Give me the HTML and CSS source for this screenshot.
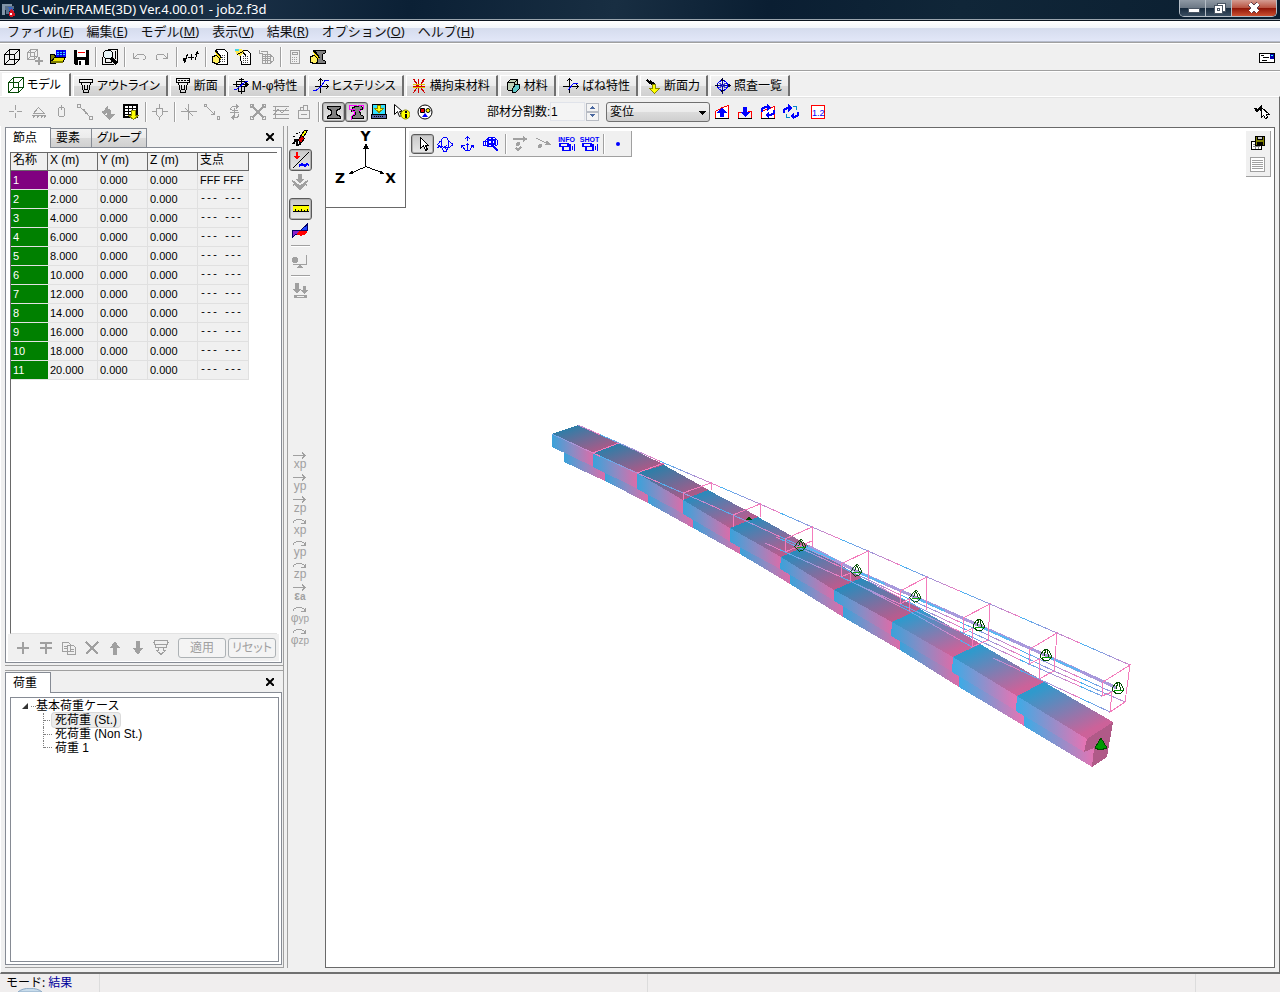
FILE: index.html
```html
<!DOCTYPE html>
<html lang="ja">
<head>
<meta charset="utf-8">
<title>UC-win/FRAME(3D) Ver.4.00.01 - job2.f3d</title>
<link rel="stylesheet" href="styles.css">
</head>
<body>
<svg class="defs" aria-hidden="true">
  <defs>
    <linearGradient id="top1" x1="0" y1=".32" x2=".58" y2="1"><stop offset="0" stop-color="#2e7ea8"/><stop offset="1" stop-color="#a95a88"/></linearGradient>
    <linearGradient id="top2" x1="0" y1=".32" x2=".58" y2="1"><stop offset="0" stop-color="#2c8abb"/><stop offset="1" stop-color="#b85c8e"/></linearGradient>
    <linearGradient id="top3" x1="0" y1=".32" x2=".58" y2="1"><stop offset="0" stop-color="#3099cc"/><stop offset="1" stop-color="#cc6299"/></linearGradient>
    <linearGradient id="side"><stop offset="0" stop-color="#3aa2da"/><stop offset=".5" stop-color="#8c8bc4"/><stop offset="1" stop-color="#dc6ca8"/></linearGradient>
    <linearGradient id="side2"><stop offset="0" stop-color="#3cabe6"/><stop offset=".5" stop-color="#928fcb"/><stop offset="1" stop-color="#e873b2"/></linearGradient>
    <linearGradient id="wire" gradientUnits="userSpaceOnUse" x1="0" y1="0" x2="60" y2="0" spreadMethod="repeat"><stop offset="0" stop-color="#46b4f4"/><stop offset="1" stop-color="#f27cc0"/></linearGradient>
    <symbol id="cone" viewBox="0 0 14 14"><path d="M1 8 4 3 7 1l3 2 3 6-3 3-4 1-4-3zM7 1 5 8M8 2l2 7" fill="none" stroke="#004a00"/><path d="M3 9.500h9" stroke="#00a000"/></symbol>
    <symbol id="cube" viewBox="0 0 16 16"><path d="M.5 5.500h10v10H.5zM5.500 .5h10v10h-10zM.5 5.500l5-5M10.500 5.500l5-5M10.500 15.500l5-5M.5 15.500l5-5" fill="none" stroke="currentColor"/></symbol>
    <symbol id="ibeam" viewBox="0 0 16 16"><path d="M1.500 2.500h13v2l-4 2v4l4 2v2h-13v-2l4-2v-4l-4-2z" fill="#808080" stroke="#000"/></symbol>
    <symbol id="straight" viewBox="0 0 14 7"><path d="M0 3.500h13M9 .5l3 3-3 3" fill="none" stroke="currentColor"/></symbol>
    <symbol id="curl" viewBox="0 0 14 7"><path d="M.5 5V3.500l3-2h5l3 2V6M8 5.500h4V2" fill="none" stroke="currentColor"/></symbol>
    <symbol id="camera" viewBox="0 0 16 9"><path d="M0 0h10v1h2v7H3V4H0zM2 1v2h6V1zM5 4v3h5V4z" fill="#00f" fill-rule="evenodd"/><path d="M13.500 3v4M15.500 1v7" stroke="#00f"/></symbol>
    <symbol id="pointer" viewBox="0 0 16 16"><path d="M5.500 1.500v11l3-3 2 5 2-1-2-4h3z" fill="#fff" stroke="#000"/></symbol>
  </defs>
</svg>

<header class="titlebar">
  <svg class="app-icon" viewBox="0 0 16 16"><path d="M1 2h10v3H4v8H1z" fill="#8296a8"/><path d="M4 4h9v3H8v5H5z" fill="#59708a"/><path d="M7 5h4l2 4-4 1z" fill="#3867c0"/><path d="M10 7c4 2 6 8 1 8-5 0-3-5-1-8z" fill="#d31522"/><path d="M10 11v2" stroke="#fff" stroke-width="2"/></svg>
  <h1 class="title">UC-win/FRAME(3D) Ver.4.00.01 - job2.f3d</h1>
  <div class="window-buttons">
    <button class="win" aria-label="最小化"><svg viewBox="0 0 26 16"><path d="M8 8h11v4H8z" fill="#fff" stroke="#4a5664"/></svg></button>
    <button class="win" aria-label="元のサイズ"><svg viewBox="0 0 26 16"><path d="M11 3h8v8h-8z" fill="#fff" stroke="#4a5664"/><path d="M8 5h8v8H8z" fill="#fff" stroke="#4a5664"/><path d="M11 8h2v2h-2z" fill="#fff" stroke="#4a5664"/></svg></button>
    <button class="win win-close" aria-label="閉じる"><svg viewBox="0 0 26 16"><path d="M9 4l8 8M17 4l-8 8" stroke="#5a4050" stroke-width="5"/><path d="M9 4l8 8M17 4l-8 8" stroke="#fff" stroke-width="3"/></svg></button>
  </div>
</header>

<nav class="menubar">
  <button class="menu">ファイル(<u>F</u>)</button>
  <button class="menu">編集(<u>E</u>)</button>
  <button class="menu">モデル(<u>M</u>)</button>
  <button class="menu">表示(<u>V</u>)</button>
  <button class="menu">結果(<u>R</u>)</button>
  <button class="menu">オプション(<u>O</u>)</button>
  <button class="menu">ヘルプ(<u>H</u>)</button>
</nav>

<div class="toolbar toolbar-main">
  <button class="tb" aria-label="新規"><svg><use href="#cube"/></svg></button>
  <button class="tb off" aria-label="追加"><svg viewBox="0 0 16 16"><path d="M.5 3.500h7v7h-7zM3.500 .5h7v7h-7zM.5 3.500l3-3M7.500 3.500l3-3M7.500 10.500l3-3M.5 10.500l3-3" fill="none" stroke="currentColor"/><path d="M12 8v8M8 12h8" stroke="currentColor" stroke-width="2"/></svg></button>
  <button class="tb" aria-label="開く"><svg viewBox="0 0 16 16"><path d="M6 1h10v7H6z" fill="#00f"/><path d="M7 3.500h8M7 5.500h8" stroke="#40d0ff"/><path d="M9.500 1v7M12.500 1v7" stroke="#00a"/><path d="M.5 5.500h4l1 2v7h-5z" fill="#808000" stroke="#000"/><path d="M4.500 8.500h11l-3 5H.5z" fill="#e8e000" stroke="#000"/><path d="M1 13h12" stroke="#808000" stroke-width="2"/></svg></button>
  <button class="tb" aria-label="保存"><svg viewBox="0 0 16 16"><path d="M1 1h15v15H2l-1-1z"/><path d="M4 1h9v7H4z" fill="#fff"/><path d="M5 3.500h7" stroke="#f00"/><path d="M5 11h7v5H5z" fill="#fff"/><path d="M6 12h2v4H6z"/></svg></button>
  <i class="sep"></i>
  <button class="tb" aria-label="検索"><svg viewBox="0 0 16 16"><path d="M5.500 .5h10v12M.5 8v7.500h11" fill="none" stroke="#000"/><path d="M3.500 10v3h6v-2M13.500 2v8" fill="none" stroke="#000"/><circle cx="6" cy="5.500" r="4.500" fill="#e8f4f8" stroke="#000"/><path d="M9 9l6 6" stroke="#000" stroke-width="3"/></svg></button>
  <i class="sep"></i>
  <button class="tb off" aria-label="元に戻す"><svg viewBox="0 0 16 16"><path d="M2.500 4v5h5M3 9l3-3 3-1h3l2 2v3l-2 1" fill="none" stroke="currentColor"/></svg></button>
  <button class="tb off" aria-label="やり直し"><svg viewBox="0 0 16 16"><path d="M13.500 4v5h-5M13 9l-3-3-3-1H4L2 7v3l2 1" fill="none" stroke="currentColor"/></svg></button>
  <i class="sep"></i>
  <button class="tb" aria-label="単位"><svg viewBox="0 0 16 16"><path d="M1.500 14l3-9M12 11l3-9M5 8.500h6M8.500 5v6" fill="none" stroke="#000"/><path d="M0 9h4l-3 5zM12 6l2-4 2 3z"/></svg></button>
  <i class="sep"></i>
  <button class="tb" aria-label="計算設定"><svg viewBox="0 0 16 16"><path d="M4.500 .5h8l3 3v12h-11z" fill="#fff" stroke="#000"/><path d="M8 6.500h6M8 8.500h6M8 10.500h6M8 12.500h6" stroke="#444" stroke-dasharray="1 1"/><path d="M.5 7.500l4-1 3 3v4l-3 1-4-1z" fill="#ffef60" stroke="#000"/><path d="M3.500 1.500l6 8" stroke="#000" stroke-width="2"/><path d="M3 3l6 7" stroke="#ffe000"/></svg></button>
  <button class="tb" aria-label="レポート設定"><svg viewBox="0 0 16 16"><path d="M4.500 1.500h8l3 3v11h-9z" fill="#fff" stroke="#000"/><path d="M8 7.500h6M8 9.500h6M8 11.500h6M8 13.500h6" stroke="#444" stroke-dasharray="1 1"/><path d="M0 1l6-1 3 3-4 4-4-2z" fill="#ffe84a"/><path d="M0 0h4v2H0z" fill="#40d8e8"/><path d="M2.500 5.500l5-3 4 5" fill="none" stroke="#000"/></svg></button>
  <button class="tb off" aria-label="レポート"><svg viewBox="0 0 16 16"><path d="M4.500 5.500h8v9h-8zM2.500 2.500h7v3M1.500 .5v4h3M4 7.500h8M4 9.500h8M4 11.500h8M7.500 5v9M9.500 5v9M12 6l3 2v4l-3 2" fill="none" stroke="currentColor"/></svg></button>
  <i class="sep"></i>
  <button class="tb off" aria-label="計算"><svg viewBox="0 0 16 16"><path d="M3.500 1.500h9v13h-9zM5.500 3.500h5v2h-5z" fill="none" stroke="currentColor"/><path d="M5 8.500h6M5 10.500h6M5 12.500h6" stroke="currentColor" stroke-dasharray="1 1"/></svg></button>
  <button class="tb" aria-label="断面編集"><svg viewBox="0 0 16 16"><path d="M4.500 1.500h11v2l-3 2v5l3 2v2h-11v-2l3-2v-5z" fill="#808080" stroke="#000"/><path d="M.5 7.500l4-1 3 3v4l-3 1-4-1z" fill="#ffef60" stroke="#000"/><path d="M3.500 1.500l6 8" stroke="#000" stroke-width="2"/><path d="M3 3l6 7" stroke="#ffe000"/></svg></button>
  <button class="tb mail" aria-label="メール"><svg viewBox="0 0 16 16"><path d="M.5 4.500h15v9H.5z" fill="#fff" stroke="#000"/><path d="M2 6.500h3M4 8.500h6M3 11.500h5" stroke="#000"/><path d="M11 5h4v5h-4z" fill="#00a"/><path d="M12 6.500h2" stroke="#3ff"/></svg></button>
</div>

<nav class="tabs">
  <button class="tab tab-on"><svg class="green"><use href="#cube"/></svg>モデル</button>
  <button class="tab"><svg viewBox="0 0 16 16"><path d="M1.500 1.500h13v3h-13zM3.500 4.500l2 10h5l2-10M6.500 6.500v5h3v-5" fill="none" stroke="#000"/></svg>アウトライン</button>
  <button class="tab"><svg viewBox="0 0 16 16"><path d="M1.500 .5h13v4h-13zM3.500 4.500l2 10h5l2-10M6.500 6.500v5h3v-5" fill="none" stroke="#000"/><path d="M3 2.500h11" stroke="#000" stroke-dasharray="2 1"/></svg>断面</button>
  <button class="tab"><svg viewBox="0 0 16 16"><path d="M0 6.500h15M8.500 0v16M3.500 3.500h9v5h-9zM5.500 8.500v5h6v-5M6 1.500h5" fill="none" stroke="#000"/><path d="M1 12l3-1 8-7 3-1" fill="none" stroke="#00f"/><path d="M13 4l3 2.500-3 2.500z"/></svg>M-φ特性</button>
  <button class="tab"><svg viewBox="0 0 16 16"><path d="M2 8.500h14M7.500 15V1M5 3l2.500-2L10 3M13 6l2.500 2.500L13 11" fill="none" stroke="#000"/><path d="M0 12.500h3l5-4 4-6h4" fill="none" stroke="#00f"/></svg>ヒステリシス</button>
  <button class="tab"><svg viewBox="0 0 16 16"><path d="M2.500 1l3 5v4l-3 5M13.500 1l-3 5v4l3 5M7.500 1v14" fill="none" stroke="#d00000" stroke-width="1"/><path d="M3 1l3 5v4l-3 4M13 1l-3 5v4l3 4" fill="none" stroke="#d00000"/><path d="M2 6.500h12M2 9.500h12" stroke="#e0c000"/><path d="M2 8h12" stroke="#d00000"/></svg>横拘束材料</button>
  <button class="tab"><svg viewBox="0 0 16 16"><path d="M2.500 4.500l3-3h7l-3 3zM2.500 4.500h7v8h-6l-1-1zM9.500 4.500l3-3v8l-3 3z" fill="#c0d0b8" stroke="#000"/><path d="M7.500 10.500l3-4h4v4l-4 4h-3z" fill="#60c8c8" stroke="#000"/></svg>材料</button>
  <button class="tab"><svg viewBox="0 0 16 16"><path d="M0 8.500h15M6.500 15V1M4 3l2.500-2L9 3M13 6l2.500 2.500L13 11" fill="none" stroke="#000"/><path d="M5 12l6-7h4" fill="none" stroke="#00f"/></svg>ばね特性</button>
  <button class="tab"><svg viewBox="0 0 16 16"><path d="M3 0L1 3l3 3 4 1 3 1-1-3-3-1-1-2-2 1z"/><path d="M7.500 6.500h3v4h4l-5 5-5-5h3z" fill="#ff0" stroke="#880"/></svg>断面力</button>
  <button class="tab"><svg viewBox="0 0 16 16"><path d="M0 7.500h16M7.500 0v16" stroke="#00a"/><circle cx="7.500" cy="7.500" r="5" fill="none" stroke="#00f"/><path d="M4 5l7 5M11 5l-7 5" stroke="#44c"/><path d="M0 7.500l3-2v4zM16 7.500l-3-2v4zM5.500 3l2-3 2 3zM5.500 12l2 3 2-3z" fill="#003"/></svg>照査一覧</button>
</nav>

<div class="toolbar toolbar-model">
  <button class="tb off" aria-label="節点"><svg viewBox="0 0 16 16"><path d="M1 7.500h5M9 7.500h5M7.500 1v5M7.500 9v5" stroke="currentColor"/></svg></button>
  <button class="tb off" aria-label="支点"><svg viewBox="0 0 16 16"><path d="M7.500 3.500l-5 6h11zM1 11.500h14M2 14l2-3M6 14l2-3M10 14l2-3M13 14l2-3" fill="none" stroke="currentColor"/></svg></button>
  <button class="tb off" aria-label="剛体"><svg viewBox="0 0 16 16"><path d="M4.500 4.500l1-1h4l1 1v7l-1 1h-4l-1-1zM7.500 1v5" fill="none" stroke="currentColor"/></svg></button>
  <button class="tb off" aria-label="部材"><svg viewBox="0 0 16 16"><path d="M2 2l12 12" stroke="currentColor"/><path d="M.5 .5h3v3h-3zM12.500 12.500h3v3h-3z" fill="#f0f0f0" stroke="currentColor"/><path d="M6 5l4 5" stroke="currentColor" stroke-width="2"/></svg></button>
  <button class="tb off" aria-label="荷重"><svg viewBox="0 0 16 16"><path d="M8 1L5 4v2L1 8l3 3 3-2v2H4l5 5 6-6h-4V6L8 5z" fill="currentColor"/></svg></button>
  <button class="tb" aria-label="表入力"><svg viewBox="0 0 16 16"><path d="M1 1h13v12H1z" fill="#fff" stroke="#000" stroke-width="2"/><path d="M1 4.500h13M1 7.500h13M1 10.500h13M5.500 1v12M9.500 1v12" stroke="#000"/><path d="M8.500 6.500h4v5h3l-5 4-5-4h3z" fill="#ff0" stroke="#880"/></svg></button>
  <i class="sep"></i>
  <button class="tb off" aria-label="選択節点"><svg viewBox="0 0 16 16"><path d="M0 7.500h5M11 7.500h5M7.500 0v4M7.500 13v3M4.500 4.500h6v6l-3 3-3-3z" fill="none" stroke="currentColor"/></svg></button>
  <i class="sep"></i>
  <button class="tb off" aria-label="座標"><svg viewBox="0 0 16 16"><path d="M0 7.500h16M7.500 0v16M4 4l8 8" stroke="currentColor"/></svg></button>
  <button class="tb off" aria-label="移動"><svg viewBox="0 0 16 16"><path d="M2 2l9 9M7 10.500h3.500V7M.5 .5h2v2h-2zM13.500 12.500h2v3h-2z" fill="none" stroke="currentColor"/></svg></button>
  <button class="tb off" aria-label="回転"><svg viewBox="0 0 16 16"><path d="M7.500 4v9M11 2.500H5.500l-2 2 1 2M3 8.500h9M11 10l1 2-2 1.500H5M9 .5l2 2-2 2M7 11.500l-2 2 2 2M5 6.500h6" fill="none" stroke="currentColor"/></svg></button>
  <button class="tb off" aria-label="交差"><svg viewBox="0 0 16 16"><path d="M2 2l12 12M14 2L2 14" stroke="currentColor" stroke-width="2"/><path d="M.5 .5h3v3h-3zM12.500 .5h3v3h-3zM.5 12.500h3v3h-3zM12.500 12.500h3v3h-3z" fill="none" stroke="currentColor"/></svg></button>
  <button class="tb off" aria-label="格子"><svg viewBox="0 0 16 16"><path d="M0 2.500h16M0 6.500h16M0 10.500h16M0 14.500h16M2.500 2v12M1 10l4-5 4 4 5-5" fill="none" stroke="currentColor"/></svg></button>
  <button class="tb off" aria-label="グループ"><svg viewBox="0 0 16 16"><path d="M2.500 6.500h11v8h-11zM4.500 6.500v-3h3M7.500 6.500v-5h4v5M5 10.500h6" fill="none" stroke="currentColor"/></svg></button>
  <i class="sep"></i>
  <button class="tb pressed" aria-label="断面表示"><svg><use href="#ibeam"/></svg></button>
  <button class="tb pressed" aria-label="変形表示"><svg viewBox="0 0 16 16"><path d="M3.500 3.500l8-2 3 3-4 2 1 4 3 2v2h-11v-2l3-2-1-4-3 1z" fill="#808080" stroke="#000"/><path d="M.5 1v4h5M3 7.500h2v3l-3 2v3M.5 1.500h7M9 1.500h5.500v3M10 6.500h2" fill="none" stroke="#f0f"/></svg></button>
  <button class="tb" aria-label="取込"><svg viewBox="0 0 16 16"><path d="M1.500 .5h13v10h-13z" fill="#30e0ff" stroke="#000"/><path d="M6.500 1.500h3v3h3l-4.500 4-4.500-4h3z" fill="#ff0" stroke="#880"/><path d="M.5 10.500h15v4H.5z" fill="#5868a8" stroke="#000"/><path d="M3 12.500h10" stroke="#000" stroke-dasharray="1 1"/></svg></button>
  <button class="tb round" aria-label="情報"><svg viewBox="0 0 16 16"><path d="M.5 .5v10l3-3 2 5 2-1-2-4h3z" fill="#fff" stroke="#000"/><circle cx="11.500" cy="10.500" r="4.500" fill="#ff0" stroke="#880"/><path d="M12 7v2M12 10v4" stroke="#000" stroke-width="2"/></svg></button>
  <button class="tb round" aria-label="表示色"><svg viewBox="0 0 16 16"><circle cx="8" cy="8" r="7" fill="#fff" stroke="#000"/><path d="M3.500 4.500h4v4h-4z" fill="#e00" stroke="#000"/><circle cx="11" cy="6.500" r="2" fill="#ff0" stroke="#000"/><path d="M8 9l3 4H5z" fill="#00f"/></svg></button>
  <label class="division" for="division">部材分割数:</label>
  <input class="division-input" id="division" type="text" value="1">
  <span class="spinner">
    <button aria-label="増やす"><svg viewBox="0 0 8 4"><path d="M1 4l3-3 3 3z"/></svg></button>
    <button aria-label="減らす"><svg viewBox="0 0 8 4"><path d="M1 0l3 3 3-3z"/></svg></button>
  </span>
  <span class="combo"><select aria-label="結果種別"><option>変位</option></select><svg viewBox="0 0 8 4"><path d="M0 0h8L4 4z"/></svg></span>
  <button class="tb" aria-label="最大"><svg viewBox="0 0 16 16"><path d="M1.500 14V7.500l7-4 6-2V14z" fill="#fff" stroke="#f00"/><path d="M6 13V9H3l5-6 5 6h-3v4z" fill="#00f"/><path d="M1 14.500h14" stroke="#000"/></svg></button>
  <button class="tb" aria-label="最小"><svg viewBox="0 0 16 16"><path d="M1.500 14V8.500h4M11 7.500h3.500V14" fill="none" stroke="#f00"/><path d="M6 3v5H3l5 5 5-5h-3V3z" fill="#00f"/><path d="M1 14.500h14" stroke="#000"/></svg></button>
  <button class="tb" aria-label="回転最大"><svg viewBox="0 0 16 16"><path d="M1.500 14V7.500l13-5V14z" fill="#fff" stroke="#f00"/><path d="M2 8V5l3-2h3M14 6v3l-3 2H9" fill="none" stroke="#00f" stroke-width="2"/><path d="M7 0l4 3-4 4zM9 8l-4 3 4 3z" fill="#00f"/><path d="M1 14.500h14" stroke="#000"/></svg></button>
  <button class="tb" aria-label="回転"><svg viewBox="0 0 16 16"><path d="M1 9V6l3-2h2M15 8v3l-3 2h-2" fill="none" stroke="#00f" stroke-width="2"/><path d="M5 0l4 4-4 4zM11 9l-4 3 4 4z" fill="#00f"/><path d="M10 2.500h3v3M3.500 10v3h3" fill="none" stroke="#08c"/></svg></button>
  <button class="tb digits" aria-label="小数点"><svg viewBox="0 0 16 16"><path d="M1.500 1.500h13v13h-13z" fill="#fff" stroke="#f00"/><text x="2" y="12" class="digit-text">1.2</text></svg></button>
  <button class="tb pick" aria-label="選択"><svg viewBox="0 0 16 16"><path d="M1 4l2 3 4-4v4" fill="none" stroke="#000" stroke-width="2"/><path d="M7.500 3.500v10l2-2 2 3 2-1-1-3h3z" fill="#fff" stroke="#000"/></svg></button>
</div>

<main class="workspace">
  <aside class="side">
    <section class="pane pane-nodes">
      <div class="pane-tabs">
        <button class="ptab ptab-on">節点</button><button class="ptab">要素</button><button class="ptab">グループ</button>
        <button class="close" aria-label="閉じる"><svg viewBox="0 0 8 8"><path d="M0 0l8 8M8 0L0 8" stroke="#000" stroke-width="2"/></svg></button>
      </div>
      <div class="pane-body">
        <div class="grid-box">
          <table class="grid">
            <thead><tr><th class="c-name">名称</th><th class="c-num">X (m)</th><th class="c-num">Y (m)</th><th class="c-num">Z (m)</th><th class="c-fix">支点</th></tr></thead>
            <tbody>
              <tr class="current"><th>1</th><td>0.000</td><td>0.000</td><td>0.000</td><td>FFF FFF</td></tr>
              <tr><th>2</th><td>2.000</td><td>0.000</td><td>0.000</td><td class="free">--- ---</td></tr>
              <tr><th>3</th><td>4.000</td><td>0.000</td><td>0.000</td><td class="free">--- ---</td></tr>
              <tr><th>4</th><td>6.000</td><td>0.000</td><td>0.000</td><td class="free">--- ---</td></tr>
              <tr><th>5</th><td>8.000</td><td>0.000</td><td>0.000</td><td class="free">--- ---</td></tr>
              <tr><th>6</th><td>10.000</td><td>0.000</td><td>0.000</td><td class="free">--- ---</td></tr>
              <tr><th>7</th><td>12.000</td><td>0.000</td><td>0.000</td><td class="free">--- ---</td></tr>
              <tr><th>8</th><td>14.000</td><td>0.000</td><td>0.000</td><td class="free">--- ---</td></tr>
              <tr><th>9</th><td>16.000</td><td>0.000</td><td>0.000</td><td class="free">--- ---</td></tr>
              <tr><th>10</th><td>18.000</td><td>0.000</td><td>0.000</td><td class="free">--- ---</td></tr>
              <tr><th>11</th><td>20.000</td><td>0.000</td><td>0.000</td><td class="free">--- ---</td></tr>
            </tbody>
          </table>
        </div>
        <div class="edit-bar">
          <button class="tb off" aria-label="追加"><svg viewBox="0 0 16 16"><path d="M2 8h12M8 2v12" stroke="currentColor" stroke-width="2"/></svg></button>
          <button class="tb off" aria-label="挿入"><svg viewBox="0 0 16 16"><path d="M2 3h12M2 8h12M8 3v11" stroke="currentColor" stroke-width="2"/></svg></button>
          <button class="tb off" aria-label="複写"><svg viewBox="0 0 16 16"><path d="M1.500 2.500h6l2 2v7h-8zM6.500 5.500h6l2 2v7h-8zM3 6.500h3M3 8.500h3M9 9.500h4M9 11.500h4" fill="#f0f0f0" stroke="currentColor"/></svg></button>
          <button class="tb off" aria-label="削除"><svg viewBox="0 0 16 16"><path d="M2 2l12 12M14 2L2 14" stroke="currentColor" stroke-width="2"/></svg></button>
          <button class="tb off" aria-label="上へ"><svg viewBox="0 0 16 16"><path d="M8 1l5 7h-3v7H6V8H3z" fill="currentColor"/></svg></button>
          <button class="tb off" aria-label="下へ"><svg viewBox="0 0 16 16"><path d="M8 15l5-7h-3V1H6v7H3z" fill="currentColor"/></svg></button>
          <button class="tb off" aria-label="並べ替え"><svg viewBox="0 0 16 16"><path d="M2 .5h12l1 2-1 2H2l-1-2zM2.500 4.500h11v3h-11zM5.500 7.500h5v3h2l-4.500 4-4.500-4h2z" fill="none" stroke="currentColor"/></svg></button>
          <button class="push" disabled>適用</button>
          <button class="push" disabled>リセット</button>
        </div>
      </div>
    </section>
    <section class="pane pane-loads">
      <div class="pane-tabs">
        <button class="ptab ptab-on">荷重</button>
        <button class="close" aria-label="閉じる"><svg viewBox="0 0 8 8"><path d="M0 0l8 8M8 0L0 8" stroke="#000" stroke-width="2"/></svg></button>
      </div>
      <div class="pane-body">
        <div class="tree">
          <div class="root"><svg viewBox="0 0 6 6"><path d="M6 0v6H0z" fill="#333"/></svg><i></i>基本荷重ケース</div>
          <ul>
            <li><span class="picked">死荷重 (St.)</span></li>
            <li><span>死荷重 (Non St.)</span></li>
            <li><span>荷重 1</span></li>
          </ul>
        </div>
      </div>
    </section>
  </aside>

  <div class="rail">
    <button class="tb" aria-label="消去"><svg viewBox="0 0 16 16"><path d="M7.500 7.500l5-7h3l-5 8z" fill="#ff0" stroke="#000"/><path d="M6.500 9.500l3-4 3 3-3 4h-2z" fill="#d00" stroke="#000"/><path d="M1 14l3-4h1v5l4-1" fill="none" stroke="#000" stroke-width="2"/><path d="M1 6.500h2M4 3.500h2M2 9.500h1M7 2.500h1" stroke="#000"/></svg></button>
    <button class="tb pressed" aria-label="荷重結果"><svg viewBox="0 0 16 16"><path d="M0 16L16 0" stroke="#000"/><path d="M4 0v5" stroke="#f00" stroke-width="2"/><path d="M1 4h6L4 8z" fill="#f00"/><path d="M6 14l3-2 3 2 2-2 2 1" fill="none" stroke="#00f" stroke-width="2"/></svg></button>
    <button class="tb off" aria-label="変形"><svg viewBox="0 0 16 16"><path d="M6 0h4v5h3l-5 4-5-4h3z" fill="currentColor"/><path d="M0 7l2 1 6 5 6-5 2-1M1 11l2-1 5 5 5-5 2 1" fill="none" stroke="currentColor" stroke-width="2"/></svg></button>
    <button class="tb pressed ruler" aria-label="寸法"><svg viewBox="0 0 16 16"><path d="M0 4h16v7H0z" fill="#ff0"/><path d="M0 4.500h16M0 10.500h16M2.500 8v3M5.500 9v2M8.500 8v3M11.500 9v2M14.500 8v3" stroke="#000"/></svg></button>
    <button class="tb" aria-label="断面力図"><svg viewBox="0 0 16 16"><path d="M0 7h9l-4 4-5 4z" fill="#82c"/><path d="M9 7l7-6v6z" fill="#24f"/><path d="M4 11l5-4h7c-2 6-7 7-12 4z" fill="#f00"/><path d="M.5 15V7.500h15V1L9 7M0 14l5-3" fill="none" stroke="#006"/></svg></button>
    <i class="hsep"></i>
    <button class="tb off" aria-label="つり合い"><svg viewBox="0 0 16 16"><circle cx="3" cy="7" r="3" fill="currentColor"/><path d="M1 11.500h13.500V2" fill="none" stroke="currentColor"/><path d="M8 11l3 4H5z" fill="currentColor"/></svg></button>
    <i class="hsep"></i>
    <button class="tb off" aria-label="沈下"><svg viewBox="0 0 16 16"><path d="M3 0h4v6h2l-4 5-4-5h2zM11 3h3v4h2l-4 4-3-4h2z" fill="currentColor"/><path d="M2 12h13v3H2z" fill="currentColor"/><path d="M5 13.500h7" stroke="#f0f0f0"/></svg></button>
    <div class="components">
      <button class="comp" aria-label="xp 方向"><svg><use href="#straight"/></svg><span>xp</span></button>
      <button class="comp" aria-label="yp 方向"><svg><use href="#straight"/></svg><span>yp</span></button>
      <button class="comp" aria-label="zp 方向"><svg><use href="#straight"/></svg><span>zp</span></button>
      <button class="comp" aria-label="xp 回転"><svg><use href="#curl"/></svg><span>xp</span></button>
      <button class="comp" aria-label="yp 回転"><svg><use href="#curl"/></svg><span>yp</span></button>
      <button class="comp" aria-label="zp 回転"><svg><use href="#curl"/></svg><span>zp</span></button>
      <button class="comp" aria-label="ひずみ"><svg><use href="#straight"/></svg><span class="strong">ε<small>a</small></span></button>
      <button class="comp" aria-label="曲率 yp"><svg><use href="#curl"/></svg><span>φ<small>yp</small></span></button>
      <button class="comp" aria-label="曲率 zp"><svg><use href="#curl"/></svg><span>φ<small>zp</small></span></button>
    </div>
  </div>

  <section class="view">
    <svg class="model" viewBox="326 128 948 839" preserveAspectRatio="xMinYMin meet" role="img" aria-label="3Dモデル">
      <g fill="url(#side)">
        <path d="M564 448 605 468V481L564 462z"/><path d="M605 467 648 489V503L605 481z"/>
        <path d="M648 489 693 514V528L648 503z"/><path d="M693 513 740 540V554L693 528z"/>
        <path d="M740 540 790 570V584L740 554z"/><path d="M790 569 843 602V617L790 584z"/>
        <path d="M843 602 900 636V650L843 617z"/><path d="M900 635 959 672V687L900 650z"/>
      </g>
      <g fill="url(#side2)"><path d="M959 672 1024 710V726L959 687z"/><path d="M1024 708 1096 745 1092 767 1024 726z"/></g>
      <g fill="url(#side)">
        <path d="M552 434 594 453V467L552 447z"/><path d="M593 453 638 473V489L593 467z"/>
        <path d="M637 473 684 500V514L637 489z"/><path d="M683 500 731 528V542L683 514z"/>
        <path d="M730 528 782 557V570L730 542z"/><path d="M781 557 835 590V601L780 569z"/>
        <path d="M834 590 893 622V636L834 601z"/><path d="M892 622 954 657 953 672 891 636z"/>
      </g>
      <g fill="url(#side2)"><path d="M953 657 1018 696 1017 711 952 672z"/><path d="M1017 696 1087 739 1084 752 1016 711z"/></g>
      <g fill="url(#top1)">
        <path d="M552 434 578 425 620 443 593 453z"/><path d="M593 453 619 443 665 465 637 473z"/>
        <path d="M637 473 664 465 709 490 683 500z"/>
      </g>
      <g fill="url(#top2)">
        <path d="M683 500 708 490 759 517 730 528z"/><path d="M730 528 758 517 808 545 781 557z"/>
        <path d="M781 557 808 545 862 578 834 590z"/><path d="M834 590 861 578 921 609 892 622z"/>
      </g>
      <g fill="url(#top3)">
        <path d="M892 622 920 609 981 644 953 657z"/><path d="M953 657 980 644 1045 682 1017 696z"/>
        <path d="M1017 696 1044 682 1113 722 1087 739z"/>
      </g>
      <path d="M1087 739 1113 722 1107 757 1092 767 1094 748 1084 752z" fill="#b05a88"/>
      <path d="M1101 738l-6 10 5 2 7-2z" fill="#009a00" stroke="#004a00"/>
      <g fill="none" stroke="url(#wire)">
        <path d="M578 425 619 443 664 463 711 483 760 504 812 527 868 551 927 577 990 604 1057 633 1130 665"/>
        <path d="M552 434 593 453 637 473 683 493 733 515 785 539 841 564 900 591 963 618 1030 649 1103 682"/>
        <path d="M765 543 785 552 841 577 900 604 963 633 1029 664 1102 696"/>
        <path d="M776 537 800 548 856 574 909 599 973 628 1039 659 1112 692"/>
        <path d="M850 581 909 611 972 647M993 658 1039 679 1110 712M868 581 926 611 988 640 1054 671 1125 702"/>
      </g>
      <path d="M808 546 856 571 915 597 978 625 1045 655 1117 688" fill="none" stroke="#a999dc" stroke-width="3"/>
      <path d="M806 547 835 560M860 573 885 584M918 599 945 611M981 627 1010 640M1048 657 1080 671" fill="none" stroke="#5cb6f2" stroke-width="2"/>
      <g fill="none" stroke="#f47cbc">
        <path d="M593 453 619 443M637 473 664 463M683 500V493L711 483V490M733 527V515L760 504V517"/>
        <path d="M812 547V527L785 539V552L812 541M868 581V551L841 564V577L850 573V581"/>
        <path d="M926 611 927 577 900 591V604L909 599V611"/>
        <path d="M963 618 990 604 988 640 972 647 973 628 963 633z"/>
        <path d="M1030 649 1057 633 1054 671 1039 679V659L1029 664z"/>
        <path d="M1103 682 1130 665 1125 702 1110 712 1112 692 1102 696z"/>
      </g>
      <path d="M746 520l3-4 3 4z" fill="#004a00"/>
      <use href="#cone" x="794" y="539" width="13" height="13"/><use href="#cone" x="850" y="564" width="13" height="13"/>
      <use href="#cone" x="909" y="590" width="13" height="13"/><use href="#cone" x="972" y="618" width="14" height="14"/>
      <use href="#cone" x="1039" y="648" width="14" height="14"/><use href="#cone" x="1111" y="681" width="14" height="14"/>
    </svg>
    <div class="overlay">
      <svg class="axes" viewBox="0 0 80 80"><path d="M40.500 39V18M40.500 39 25 46M40.500 39l18 7" fill="none" stroke="#000"/><path d="M40.500 15l3 6h-6zM22 47l5-4 1 4zM60 47l-5-4-1 4z"/><text x="35" y="13">Y</text><text x="9" y="56">Z</text><text x="60" y="56">X</text></svg>
      <div class="view-tools">
        <button class="tb pressed" aria-label="選択"><svg><use href="#pointer"/></svg></button>
        <button class="tb" aria-label="回転"><svg viewBox="0 0 16 16"><path d="M4.500 4l2-3h3l2 4v6l-2 4h-3l-2-4zM5 5.500H3l-2.500 3 2 2h3M.5 12l2-2 2 2M12 5.500l3 2v2l-3 2H7M10 9l-3 2.500 3 2" fill="none" stroke="#00f"/></svg></button>
        <button class="tb" aria-label="移動"><svg viewBox="0 0 16 16"><path d="M7.500 1v4M5 3l2.500-2L10 3M7.500 7v8M2 9l3 5h5l3-5M1.500 12V9h3M13.500 12V9h-3M6 8.500h3" fill="none" stroke="#00f"/></svg></button>
        <button class="tb" aria-label="拡大"><svg viewBox="0 0 16 16"><path d="M5.500 1.500h6l3 3v4l-3 2h-6l-3-2v-4zM0 5.500h5v4H0z" fill="#fff" stroke="#00f"/><path d="M4 4h8M4 8h8M5 2v9M9 2v8M12 3v6M10 10l5 5" stroke="#00f" stroke-width="2"/></svg></button>
        <i class="sep"></i>
        <button class="tb off" aria-label="再生"><svg viewBox="0 0 16 16"><path d="M1 3h11M4 12l2 2 3-3" fill="none" stroke="currentColor" stroke-width="2"/><path d="M11 0l5 3-5 3z" fill="currentColor"/><circle cx="6" cy="8" r="2" fill="currentColor"/></svg></button>
        <button class="tb off" aria-label="経路"><svg viewBox="0 0 16 16"><path d="M1 2l12 6" stroke="currentColor"/><path d="M12 4l4 5h-6z" fill="currentColor"/><circle cx="5" cy="10" r="2" fill="currentColor"/></svg></button>
        <button class="tb cam" aria-label="INFO"><span>INFO</span><svg><use href="#camera"/></svg></button>
        <button class="tb cam" aria-label="SHOT"><span>SHOT</span><svg><use href="#camera"/></svg></button>
        <i class="sep"></i>
        <button class="tb round" aria-label="点"><svg viewBox="0 0 16 16"><circle cx="8" cy="8" r="2" fill="#00f"/></svg></button>
      </div>
      <div class="save-tools">
        <button class="tb" aria-label="画像保存"><svg viewBox="0 0 16 16"><path d="M1.500 6.500h10v8h-10z" fill="#fff" stroke="#000"/><path d="M3 9.500h7M3 11.500h7M5.500 8v6M8.500 8v6" stroke="#888"/><path d="M5.500 1.500h9v9h-9z" fill="#808000" stroke="#000"/><path d="M7.500 1.500h5v3h-5z" fill="#c8c8c8" stroke="#000"/><path d="M7 7h6v3H7z"/></svg></button>
        <button class="tb off" aria-label="一覧"><svg viewBox="0 0 16 16"><path d="M.5 .5h14v14H.5zM2 3.500h11M2 5.500h11M2 7.500h11M2 9.500h11M2 11.500h11" fill="#fff" stroke="currentColor"/></svg></button>
      </div>
    </div>
  </section>
</main>

<footer class="status">
  <div class="mode">モード: <b>結果</b><svg class="orb" viewBox="0 0 24 4"><path d="M0 4c5-5 19-5 24 0z" fill="#c8dceb" stroke="#8aa8c4"/></svg></div>
  <div class="st-wide"></div><div class="st-wide"></div><div class="st-end"></div>
</footer>
</body>
</html>
```
FILE: styles.css
```css
* { box-sizing: border-box; }
body {
  margin: 0;
  height: 100vh;
  display: flex;
  flex-direction: column;
  overflow: hidden;
  background: #f0f0f0;
  color: #000;
  font: 12px/16px "Liberation Sans", "Noto Sans CJK JP", sans-serif;
}
button, input, select { font: inherit; color: inherit; }
button { border: 0; margin: 0; padding: 0; background: none; }
svg { display: block; shape-rendering: crispEdges; }
.defs { position: absolute; width: 0; height: 0; }

/* Title bar and menu */
.titlebar {
  flex: none;
  display: flex;
  align-items: flex-start;
  height: 21px;
  background: linear-gradient(100deg, #0b2033, #1a3046 18%, #0b2035 32%, #182e42 48%, #0a1e32 60%, #102638 75%, #0a1e30);
  border-bottom: 1px solid #0a1420;
  box-shadow: inset 0 -1px #9aa5ae;
}
.app-icon { width: 16px; height: 16px; margin: 2px 4px 0 1px; }
.title { margin: 0; flex: 1; color: #fff; font: 13px/19px "Noto Sans", sans-serif; }
.window-buttons {
  display: flex;
  margin-right: 3px;
  border: 1px solid #b4bdc6;
  border-top: 0;
  border-radius: 0 0 5px 5px;
  overflow: hidden;
}
.win { width: 26px; height: 16px; background: linear-gradient(#8f99a4, #6b7784 50%, #16293c 52%, #3b4f62); border-right: 1px solid #b4bdc6; }
.win svg { width: 26px; height: 16px; }
.win-close { width: 44px; border: 0; background: linear-gradient(#d49c92, #b8503e 50%, #8f1608 52%, #cc5030); }
.win-close svg { margin: 0 auto; }
.menubar {
  flex: none;
  display: flex;
  gap: 13px;
  height: 21px;
  padding-left: 7px;
  background: linear-gradient(#fff, #f2f5fb 35%, #d5dcee 36%, #e2e7f8);
  border-bottom: 1px solid #b6bccc;
}
.menu { font: 13px/19px "Noto Sans", "Noto Sans CJK JP", sans-serif; color: #111; white-space: nowrap; }

/* Toolbars */
.toolbar { flex: none; display: flex; align-items: center; }
.toolbar-main { height: 29px; padding-left: 1px; border-top: 1px solid #a0a0a0; border-bottom: 1px solid #a0a0a0; box-shadow: inset 0 1px #fff, 0 1px #fff; }
.toolbar-model { height: 30px; padding-left: 5px; border-top: 1px solid #fff; border-right: 1px solid #696969; box-shadow: inset 0 1px #e3e3e3; }
.tb { flex: none; width: 23px; height: 22px; display: flex; align-items: center; padding-left: 3px; }
.tb svg { width: 16px; height: 16px; }
.off { color: #a0a0a0; }
.pressed { border: 1px solid #5a5a5a; border-radius: 3px; background: linear-gradient(#c8c8c8, #e8e8e8); box-shadow: inset 0 0 0 1px #b0b0b0; height: 20px; }
.round svg { shape-rendering: auto; }
.sep { flex: none; width: 2px; height: 20px; margin: 0 2px; border-left: 1px solid #a0a0a0; border-right: 1px solid #fff; }
.mail { margin-left: auto; margin-right: 1px; }
.pick { margin-left: auto; margin-right: 5px; }
.division { margin-left: 50px; width: 63px; white-space: nowrap; }
.division-input { width: 35px; height: 19px; padding: 0; border: 1px solid #e0e3ea; background: #f4f4f4; }
.spinner { display: flex; flex-direction: column; margin: 0 7px 0 1px; }
.spinner button { width: 13px; height: 9px; border: 1px solid #b8bcc4; background: #f4f4f4; display: flex; align-items: center; justify-content: center; }
.spinner svg { width: 7px; height: 4px; fill: #4a68a0; }
.combo { position: relative; display: block; margin-right: 1px; }
.combo select {
  appearance: none;
  width: 104px;
  height: 20px;
  padding: 0 3px;
  border: 1px solid #707070;
  border-radius: 3px;
  background: linear-gradient(#f2f2f2, #ebebeb 48%, #dcdcdc 50%, #cfcfcf);
}
.combo svg { position: absolute; right: 4px; top: 9px; width: 7px; height: 4px; pointer-events: none; }
.digits { margin-left: 4px; }
.digit-text { font: 9px "Liberation Sans", sans-serif; fill: #00f; }

/* Main tabs */
.tabs { flex: none; display: flex; align-items: flex-end; height: 25px; padding: 2px 2px 0; gap: 2px; }
.tab {
  display: flex;
  align-items: center;
  gap: 3px;
  height: 21px;
  padding: 0 6px 0 4px;
  border-right: 2px solid #707070;
  border-top: 1px solid #fff;
  border-left: 1px solid #fff;
  background: linear-gradient(#f2f2f2, #ebebeb 50%, #dadada 52%, #d0d0d0);
  white-space: nowrap;
  font-feature-settings: "palt";
}
.tab svg { width: 16px; height: 16px; }
.tab-on { height: 23px; background: #fff; padding: 0 8px 0 5px; }
.green { color: #064a06; }

/* Workspace */
.workspace { flex: 1; min-height: 0; display: flex; padding: 0 4px 4px 1px; border-right: 1px solid #696969; border-bottom: 2px solid #707070; border-left: 1px solid #fff; }
.side { flex: none; width: 282px; display: flex; flex-direction: column; gap: 4px; padding-left: 3px; border-right: 1px solid #a0a0a0; }
.pane { display: flex; flex-direction: column; min-height: 0; border-bottom: 1px solid #a0a0a0; padding: 1px 1px 2px 0; }
.pane-nodes { flex: 541 1 0; }
.pane-loads { flex: 295 1 0; border-top: 1px solid #a0a0a0; }
.pane-tabs { display: flex; align-items: flex-end; height: 20px; flex: none; }
.ptab { height: 19px; padding: 0 5px; border: 1px solid #868b94; border-bottom: 0; border-left: 0; background: linear-gradient(#f2f2f2, #ebebeb 50%, #dadada 52%, #d0d0d0); min-width: 41px; text-align: left; font-feature-settings: "palt"; }
.ptab-on { height: 21px; margin-bottom: -1px; min-width: 46px; border-left: 1px solid #868b94; background: #fff; padding: 0 7px; z-index: 1; }
.close { margin: 0 8px 6px auto; }
.close svg { width: 8px; height: 8px; shape-rendering: auto; }
.pane-body { flex: 1; min-height: 0; display: flex; flex-direction: column; padding: 4px; border: 1px solid #868b94; background: #fff; }
.pane-nodes .pane-body { padding-bottom: 1px; }
.pane-loads .pane-body { padding: 4px 2px 2px 4px; }
.grid-box { flex: 1; min-height: 0; border-left: 1px solid #696969; border-top: 1px solid #696969; border-bottom: 1px solid #e3e3e3; overflow: hidden; }
.grid { border-collapse: separate; border-spacing: 0; table-layout: fixed; width: 238px; font-size: 11px; line-height: 14px; font-weight: normal; }
.grid th, .grid td { height: 19px; padding: 0 2px; text-align: left; vertical-align: top; font-weight: normal; white-space: nowrap; overflow: hidden; }
.grid td { background: #f0f0f0; border-right: 1px solid #e0e0e0; border-bottom: 1px solid #e0e0e0; padding-top: 2px; }
.grid thead th { height: 18px; background: #f0f0f0; border-right: 1px solid #696969; border-bottom: 1px solid #696969; font-size: 12px; }
.grid tbody th { background: #008000; color: #fff; border-bottom: 1px solid #e3e3e3; padding-top: 2px; }
.grid tbody .current th { background: #800080; }
.grid .free { font-family: "Liberation Mono", monospace; font-size: 10px; }
.c-name { width: 37px; }
.c-num { width: 50px; }
.c-fix { width: 51px; }
.edit-bar { flex: none; display: flex; align-items: center; height: 27px; background: #f0f0f0; margin: 0 -2px; padding-left: 4px; }
.push { flex: none; width: 48px; height: 20px; border: 1px solid #adb2b5; border-radius: 3px; background: #f4f4f4; color: #a0a0a0; margin-left: 5px; font-feature-settings: "palt"; white-space: nowrap; }
.push + .push { margin-left: 2px; }
.tree { flex: 1; border: 1px solid #868b94; line-height: 14px; padding: 1px 0 0 11px; }
.root { display: flex; align-items: center; }
.root svg { width: 6px; height: 6px; shape-rendering: auto; }
.root i { width: 5px; margin: 0 0 0 3px; border-top: 1px dotted #808080; }
.tree ul { list-style: none; margin: 0; padding: 0 0 0 21px; }
.tree li { display: flex; align-items: center; height: 14px; border-left: 1px dotted #808080; }
.tree li:last-child { height: 7px; }
.tree li::before { content: ""; width: 8px; border-top: 1px dotted #808080; }
.tree li:last-child::before { align-self: flex-end; }
.tree li:last-child span { align-self: flex-start; }
.tree span { padding: 0 3px; }
.picked { border-radius: 3px; background: #ececec; box-shadow: 0 0 0 1px #dadada; }

/* Result rail */
.rail { flex: none; display: flex; flex-direction: column; align-items: center; width: 38px; margin-left: 3px; padding: 1px 13px 0 0; border-left: 1px solid #a0a0a0; }
.rail .pressed { height: 22px; }
.ruler { margin-top: 5px; }
.hsep { width: 19px; height: 2px; margin: 3px 0; border-top: 1px solid #a0a0a0; border-bottom: 1px solid #fff; }
.components { margin-top: 150px; display: flex; flex-direction: column; }
.comp { display: flex; flex-direction: column; align-items: center; width: 20px; height: 22px; color: #a0a0a0; line-height: 10px; font-size: 12px; }
.comp svg { width: 14px; height: 7px; }
.comp span { white-space: nowrap; }
.comp small { font-size: 10px; }
.strong { font-weight: bold; }

/* 3D view */
.view { position: relative; flex: 1; min-width: 0; margin-top: 1px; border: 1px solid #696969; background: #fff; }
.model { position: absolute; inset: 0; width: 100%; height: 100%; }
.overlay { position: relative; display: flex; align-items: flex-start; }
.axes { width: 80px; height: 80px; border-right: 1px solid #696969; border-bottom: 1px solid #696969; font: bold 14px "DejaVu Sans", sans-serif; background: #fff; }
.view-tools { display: flex; align-items: center; height: 26px; margin: 3px 0 0 3px; padding: 0 1px 0 2px; background: #f0f0f0; border-right: 1px solid #a0a0a0; border-bottom: 1px solid #a0a0a0; }
.cam { flex-direction: column; justify-content: center; padding: 0; }
.cam span { font: bold 7px/7px "Liberation Sans", sans-serif; color: #00f; }
.cam svg { width: 16px; height: 9px; }
.save-tools { margin: 3px 3px 0 auto; display: flex; flex-direction: column; align-items: center; width: 25px; height: 46px; padding-top: 1px; background: #f0f0f0; border-right: 1px solid #a0a0a0; border-bottom: 1px solid #a0a0a0; }

/* Status bar */
.status { flex: none; display: flex; height: 18px; background: #f0eeee; font-family: "Noto Sans", "Noto Sans CJK JP", sans-serif; line-height: 18px; }
.mode { position: relative; width: 100px; padding-left: 6px; border-right: 1px solid #dcdcdc; }
.mode b { font-weight: normal; color: #00009c; }
.orb { position: absolute; left: 18px; bottom: 0; width: 24px; height: 4px; shape-rendering: auto; }
.st-wide { flex: 1; border-right: 1px solid #dcdcdc; }
.st-end { width: 84px; }
```
